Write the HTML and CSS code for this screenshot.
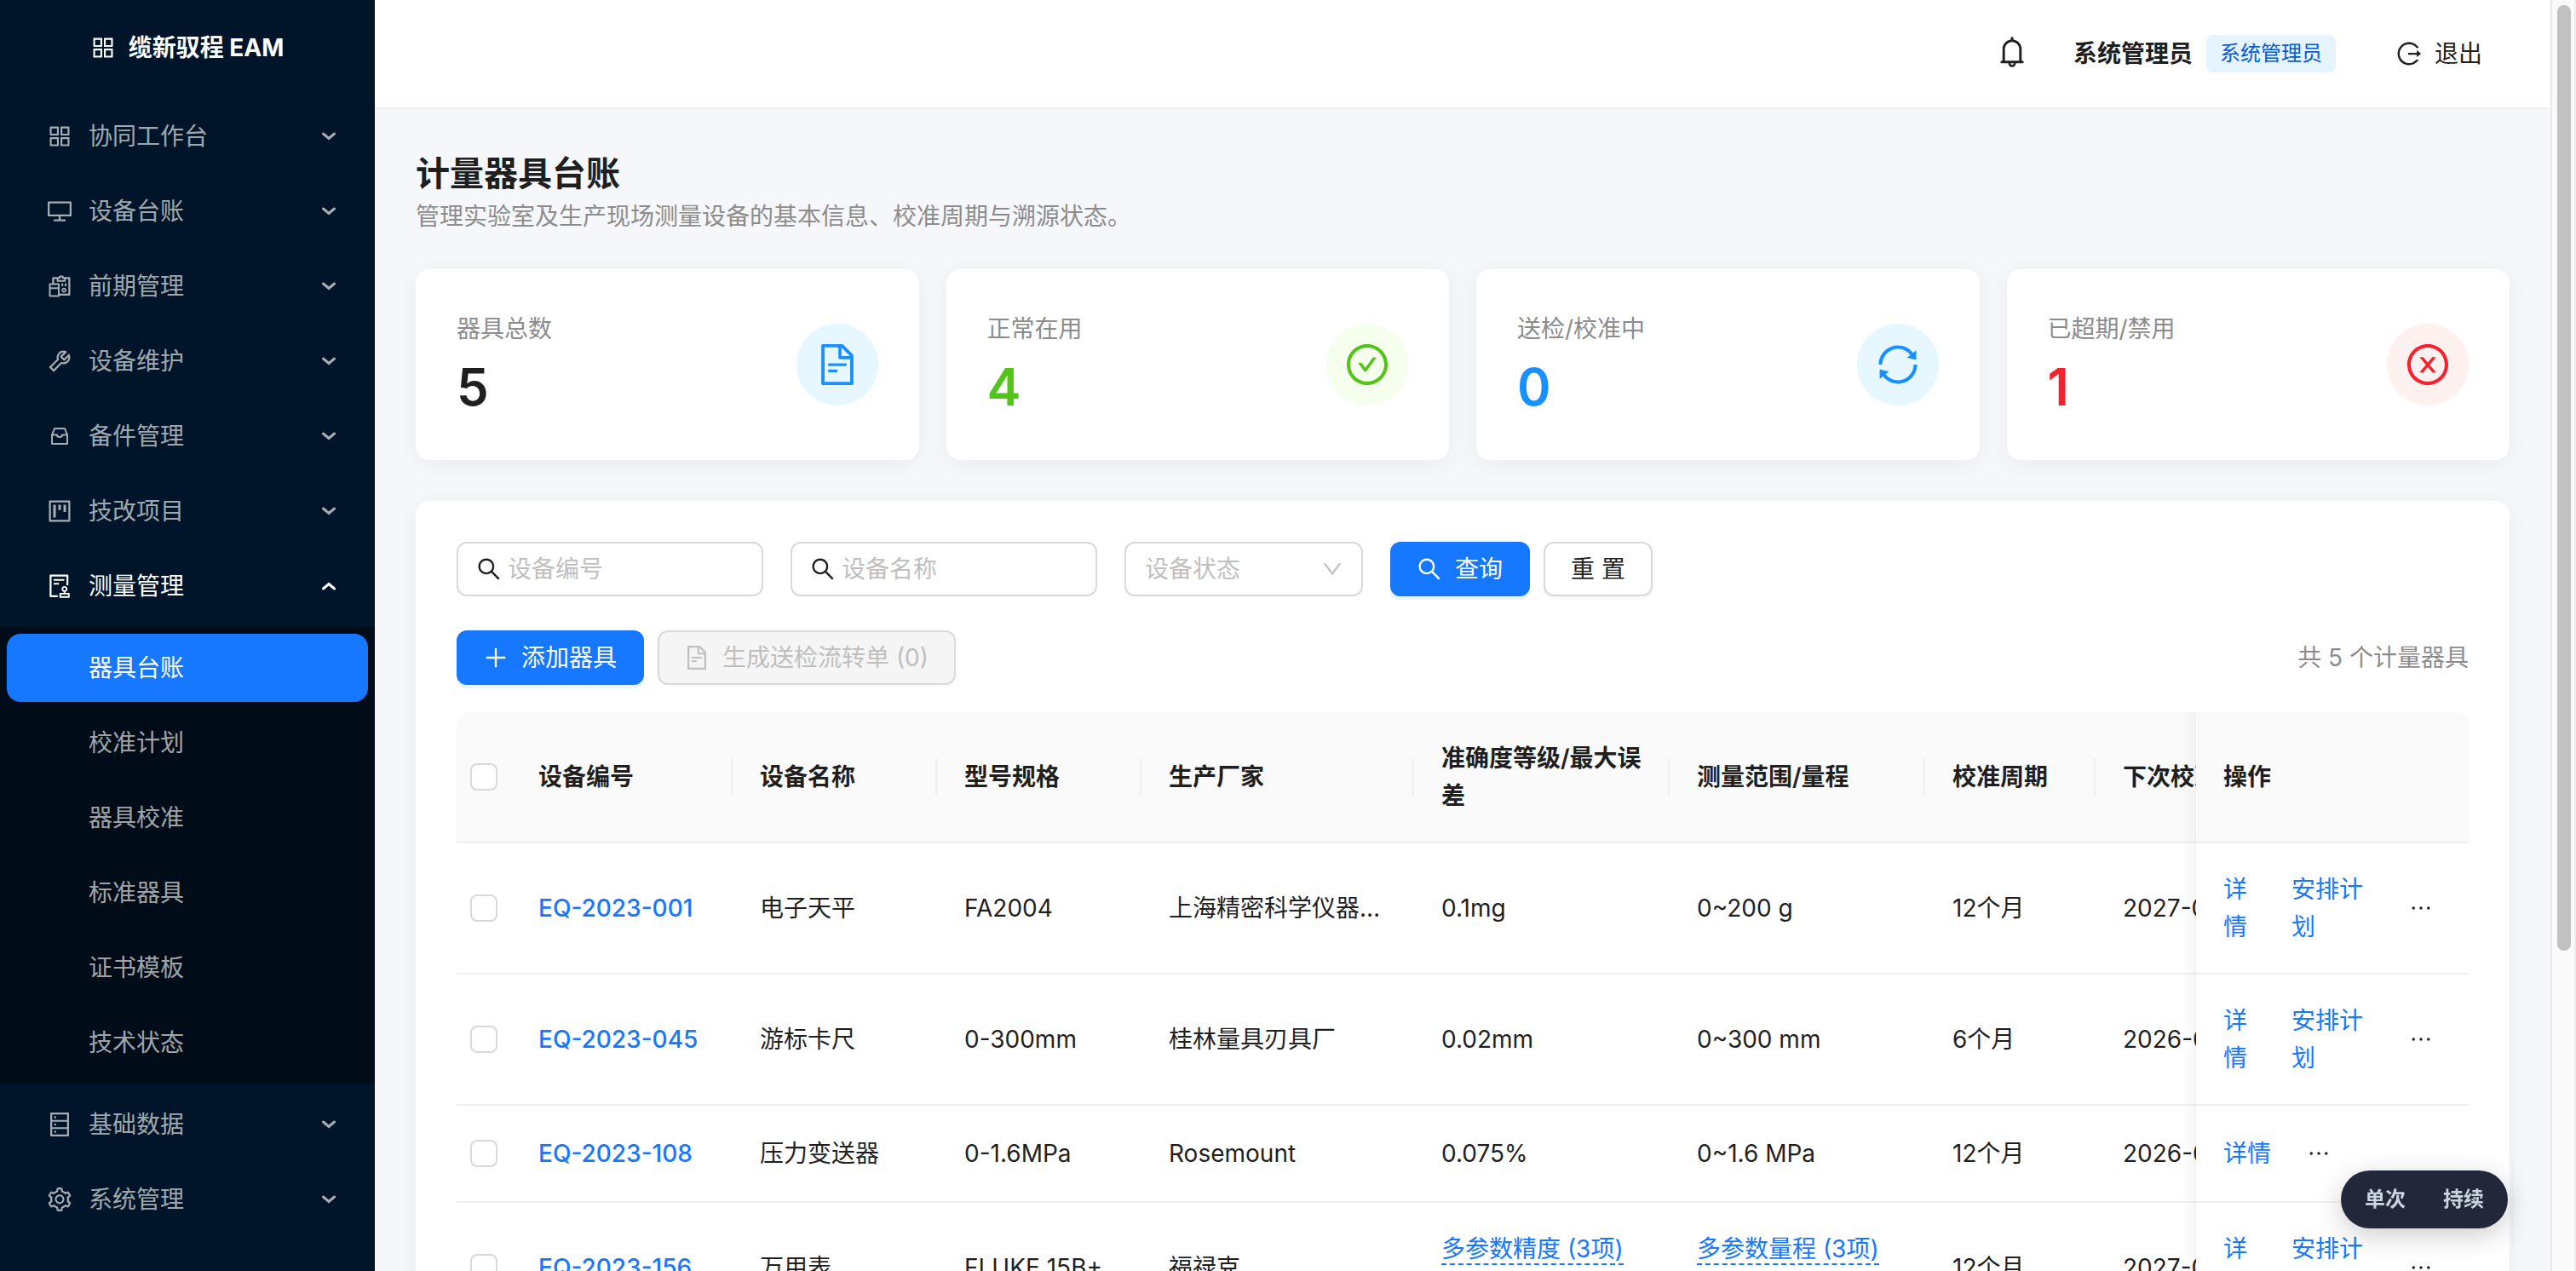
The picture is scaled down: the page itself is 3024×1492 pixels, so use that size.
FILE: index.html
```html
<!DOCTYPE html>
<html lang="zh-CN">
  <head>
    <meta charset="utf-8">
    <title>计量器具台账 - 缆新驭程 EAM</title>
    <link rel="stylesheet" href="styles.css">
  </head>
  <body>
    <svg class="sprite" aria-hidden="true">
      <symbol id="i-appstore" viewBox="64 64 896 896"><path d="M464 144H160c-8.800 0-16 7.200-16 16v304c0 8.800 7.200 16 16 16h304c8.800 0 16-7.200 16-16V160c0-8.800-7.200-16-16-16zm-52 268H212V212h200v200zm452-268H560c-8.800 0-16 7.200-16 16v304c0 8.800 7.200 16 16 16h304c8.800 0 16-7.200 16-16V160c0-8.800-7.200-16-16-16zm-52 268H612V212h200v200zM464 544H160c-8.800 0-16 7.200-16 16v304c0 8.800 7.200 16 16 16h304c8.800 0 16-7.200 16-16V560c0-8.800-7.200-16-16-16zm-52 268H212V612h200v200zm452-268H560c-8.800 0-16 7.200-16 16v304c0 8.800 7.200 16 16 16h304c8.800 0 16-7.200 16-16V560c0-8.800-7.200-16-16-16zm-52 268H612V612h200v200z"/></symbol>
      <symbol id="i-desktop" viewBox="64 64 896 896"><path d="M928 140H96c-17.700 0-32 14.300-32 32v496c0 17.700 14.300 32 32 32h380v112H304c-8.800 0-16 7.200-16 16v48c0 4.400 3.600 8 8 8h432c4.400 0 8-3.600 8-8v-48c0-8.800-7.200-16-16-16H548V700h380c17.700 0 32-14.300 32-32V172c0-17.700-14.300-32-32-32zm-40 488H136V212h752v416z"/></symbol>
      <symbol id="i-reconciliation" viewBox="64 64 896 896"><path d="M676 565c-50.800 0-92 41.200-92 92s41.200 92 92 92 92-41.200 92-92-41.200-92-92-92zm0 126c-18.800 0-34-15.200-34-34s15.200-34 34-34 34 15.200 34 34-15.200 34-34 34zm204-523H668c0-30.900-25.100-56-56-56h-80c-30.900 0-56 25.100-56 56H264c-17.700 0-32 14.300-32 32v200h-88c-17.700 0-32 14.300-32 32v448c0 17.700 14.300 32 32 32h336c17.700 0 32-14.300 32-32v-16h368c17.700 0 32-14.300 32-32V200c0-17.700-14.300-32-32-32zm-412 64h72v-56h64v56h72v48H468v-48zm-20 616H176V616h272v232zm0-296H176v-88h272v88zm392 240H512V432c0-17.700-14.300-32-32-32H304V240h100v104h336V240h100v552zM704 408v96c0 4.400 3.600 8 8 8h48c4.400 0 8-3.600 8-8v-96c0-4.400-3.600-8-8-8h-48c-4.400 0-8 3.600-8 8zM592 512h48c4.400 0 8-3.600 8-8v-96c0-4.400-3.600-8-8-8h-48c-4.400 0-8 3.600-8 8v96c0 4.400 3.600 8 8 8z"/></symbol>
      <symbol id="i-tool" viewBox="64 64 896 896"><path d="M876.600 239.500c-.5-.9-1.200-1.800-2-2.500-5-5-13.100-5-18.100 0L684.200 409.300l-67.900-67.900L788.700 169c.8-.8 1.400-1.600 2-2.500 3.600-6.100 1.600-13.900-4.500-17.500-98.200-58-226.800-44.700-311.300 39.700-67 67-89.200 162-66.500 247.400l-293 293c-3 3-2.800 7.900.3 11l169.700 169.700c3.100 3.100 8.100 3.300 11 .3l292.900-292.900c85.500 22.800 180.500.7 247.600-66.400 84.400-84.500 97.700-213.100 39.700-311.300zM786 499.800c-58.100 58.100-145.300 69.300-214.600 33.600l-8.800 8.800-.1-.1-274 274.100-79.200-79.200 230.100-230.100s0 .1.1.1l52.800-52.800c-35.700-69.300-24.500-156.500 33.600-214.600a184.200 184.200 0 01144-53.500L537 318.900a32.050 32.050 0 000 45.300l124.500 124.500a32.050 32.050 0 0045.300 0l132.800-132.800c3.700 51.800-14.400 104.800-53.600 143.900z"/></symbol>
      <symbol id="i-box" viewBox="0 0 28 28"><path d="M5 12.500v10.500h18V12.500L20 5H8zM5 12.500h6a3 2.500 0 0 0 6 0h6" fill="none" stroke="currentColor" stroke-width="2" stroke-linejoin="round"/></symbol>
      <symbol id="i-project" viewBox="64 64 896 896"><path d="M280 752h80c4.400 0 8-3.600 8-8V280c0-4.400-3.600-8-8-8h-80c-4.400 0-8 3.600-8 8v464c0 4.400 3.600 8 8 8zm192-280h80c4.400 0 8-3.600 8-8V280c0-4.400-3.600-8-8-8h-80c-4.400 0-8 3.600-8 8v184c0 4.400 3.600 8 8 8zm192 72h80c4.400 0 8-3.600 8-8V280c0-4.400-3.600-8-8-8h-80c-4.400 0-8 3.600-8 8v256c0 4.400 3.600 8 8 8zm216-432H144c-17.700 0-32 14.300-32 32v736c0 17.700 14.300 32 32 32h736c17.700 0 32-14.300 32-32V144c0-17.700-14.300-32-32-32zm-40 728H184V184h656v656z"/></symbol>
      <symbol id="i-audit" viewBox="64 64 896 896"><path d="M296 250c-4.400 0-8 3.600-8 8v48c0 4.400 3.600 8 8 8h384c4.400 0 8-3.600 8-8v-48c0-4.400-3.600-8-8-8H296zm184 144H296c-4.400 0-8 3.600-8 8v48c0 4.400 3.600 8 8 8h184c4.400 0 8-3.600 8-8v-48c0-4.400-3.600-8-8-8zm-48 458H208V148h560v320c0 4.400 3.600 8 8 8h56c4.400 0 8-3.600 8-8V108c0-17.700-14.300-32-32-32H168c-17.700 0-32 14.300-32 32v784c0 17.700 14.300 32 32 32h264c4.400 0 8-3.600 8-8v-56c0-4.400-3.600-8-8-8zm440-88H728v-36.600c46.300-13.800 80-56.600 80-107.400 0-61.900-50.100-112-112-112s-112 50.100-112 112c0 50.700 33.700 93.600 80 107.400V764H520c-8.800 0-16 7.200-16 16v152c0 8.800 7.200 16 16 16h352c8.800 0 16-7.200 16-16V780c0-8.800-7.200-16-16-16zM646 620c0-27.600 22.400-50 50-50s50 22.400 50 50-22.400 50-50 50-50-22.400-50-50zm180 266H566v-60h260v60z"/></symbol>
      <symbol id="i-database" viewBox="64 64 896 896"><path d="M832 64H192c-17.700 0-32 14.300-32 32v832c0 17.700 14.300 32 32 32h640c17.700 0 32-14.300 32-32V96c0-17.700-14.300-32-32-32zm-600 72h560v208H232V136zm560 480H232V408h560v208zm0 272H232V680h560v208zM304 240a40 40 0 1080 0 40 40 0 10-80 0zm0 272a40 40 0 1080 0 40 40 0 10-80 0zm0 272a40 40 0 1080 0 40 40 0 10-80 0z"/></symbol>
      <symbol id="i-setting" viewBox="64 64 896 896"><path d="M924.800 625.700l-65.500-56c3.100-19 4.700-38.400 4.700-57.800s-1.600-38.800-4.700-57.800l65.500-56a32.030 32.030 0 009.300-35.200l-.9-2.600a443.740 443.740 0 00-79.700-137.900l-1.800-2.100a32.120 32.120 0 00-35.100-9.500l-81.300 28.900c-30-24.600-63.500-44-99.700-57.600l-15.700-85a32.050 32.050 0 00-25.800-25.700l-2.700-.5c-52.100-9.400-106.900-9.400-159 0l-2.700.5a32.050 32.050 0 00-25.800 25.700l-15.800 85.400a351.860 351.860 0 00-99 57.400l-81.900-29.100a32 32 0 00-35.100 9.500l-1.800 2.100a446.020 446.020 0 00-79.700 137.900l-.9 2.600c-4.500 12.500-.8 26.500 9.300 35.200l66.300 56.600c-3.100 18.800-4.600 38-4.600 57.100 0 19.200 1.500 38.400 4.600 57.100L99 625.500a32.030 32.030 0 00-9.300 35.200l.9 2.600c18.100 50.400 44.900 96.900 79.700 137.900l1.800 2.100a32.120 32.120 0 0035.100 9.500l81.900-29.100c29.800 24.500 63.100 43.900 99 57.400l15.800 85.400a32.050 32.050 0 0025.800 25.700l2.700.5a449.400 449.400 0 00159 0l2.700-.5a32.050 32.050 0 0025.800-25.700l15.700-85a350 350 0 0099.700-57.600l81.300 28.900a32 32 0 0035.100-9.500l1.800-2.100c34.800-41.100 61.600-87.500 79.700-137.900l.9-2.600c4.500-12.300.8-26.300-9.300-35zM788.300 465.900c2.500 15.100 3.800 30.600 3.800 46.100s-1.300 31-3.800 46.100l-6.600 40.100 74.700 63.900a370.030 370.030 0 01-42.600 73.600L721 702.800l-31.400 25.800c-23.900 19.600-50.500 35-79.300 45.800l-38.100 14.300-17.900 97a377.500 377.500 0 01-85 0l-17.900-97.200-37.800-14.500c-28.500-10.800-55-26.200-78.700-45.700l-31.400-25.900-93.400 33.200c-17-22.900-31.200-47.600-42.600-73.600l75.500-64.500-6.500-40c-2.400-14.900-3.700-30.300-3.700-45.500 0-15.300 1.200-30.600 3.700-45.500l6.500-40-75.500-64.500c11.300-26.100 25.600-50.700 42.600-73.600l93.400 33.200 31.400-25.900c23.700-19.500 50.200-34.900 78.700-45.700l37.900-14.300 17.900-97.200c28.100-3.200 56.800-3.200 85 0l17.900 97 38.100 14.300c28.700 10.800 55.400 26.200 79.300 45.800l31.400 25.800 92.800-32.900c17 22.900 31.200 47.600 42.600 73.600L781.800 426l6.500 39.900zM512 326c-97.200 0-176 78.800-176 176s78.800 176 176 176 176-78.800 176-176-78.800-176-176-176zm79.200 255.200A111.600 111.600 0 01512 614c-29.900 0-58-11.700-79.200-32.800A111.600 111.600 0 01400 502c0-29.900 11.700-58 32.800-79.200C454 401.600 482.100 390 512 390c29.900 0 58 11.600 79.200 32.800A111.600 111.600 0 01624 502c0 29.900-11.700 58-32.800 79.200z"/></symbol>
      <symbol id="i-arrow" viewBox="0 0 16 16"><path d="M1.500 5L8 10.500 14.500 5" fill="none" stroke="currentColor" stroke-width="3" stroke-linecap="round"/></symbol>
      <symbol id="i-bell" viewBox="64 64 896 896"><path d="M816 768h-24V428c0-141.100-104.300-257.700-240-277.100V112c0-22.100-17.900-40-40-40s-40 17.900-40 40v38.900c-135.700 19.400-240 136-240 277.100v340h-24c-17.700 0-32 14.300-32 32v32c0 4.400 3.600 8 8 8h216c0 61.800 50.200 112 112 112s112-50.200 112-112h216c4.400 0 8-3.600 8-8v-32c0-17.700-14.300-32-32-32zM512 888c-26.500 0-48-21.500-48-48h96c0 26.500-21.500 48-48 48zM304 768V428c0-55.600 21.600-107.800 60.900-147.100S456.400 220 512 220c55.600 0 107.800 21.600 147.100 60.900S720 372.400 720 428v340H304z"/></symbol>
      <symbol id="i-logout" viewBox="64 64 896 896"><path d="M868 732h-70.300c-4.800 0-9.300 2.100-12.300 5.800-7 8.500-14.500 16.700-22.400 24.500a353.840 353.840 0 01-112.700 75.900A352.800 352.800 0 01512.400 866c-47.900 0-94.300-9.400-137.900-27.800a353.840 353.840 0 01-112.700-75.900 353.280 353.280 0 01-76-112.500C167.300 606.200 158 559.900 158 512s9.400-94.200 27.800-137.800c17.800-42.100 43.400-80 76-112.500s70.500-58.100 112.700-75.900c43.600-18.400 90-27.800 137.900-27.800 47.900 0 94.300 9.300 137.900 27.800 42.200 17.800 80.100 43.400 112.700 75.900 7.900 7.900 15.300 16.100 22.400 24.500 3 3.700 7.600 5.800 12.300 5.800H868c6.300 0 10.200-7 6.700-12.300C798 160.500 663.800 81.600 511.300 82 271.700 82.600 79.600 277.100 82 516.400 84.400 751.900 276.200 942 512.400 942c152.100 0 285.700-78.800 362.300-197.700 3.400-5.300-.4-12.300-6.700-12.300zm88.900-226.300L815 393.700c-5.300-4.200-13-.4-13 6.300v76H488c-4.400 0-8 3.600-8 8v56c0 4.400 3.600 8 8 8h314v76c0 6.700 7.800 10.500 13 6.300l141.900-112a8 8 0 000-12.600z"/></symbol>
      <symbol id="i-file" viewBox="64 64 896 896"><path d="M854.600 288.600L639.400 73.400c-6-6-14.100-9.400-22.600-9.400H192c-17.700 0-32 14.300-32 32v832c0 17.700 14.300 32 32 32h640c17.700 0 32-14.300 32-32V311.300c0-8.500-3.400-16.700-9.400-22.700zM790.200 326H602V137.800L790.200 326zm1.800 562H232V136h302v216a42 42 0 0042 42h216v494zM504 618H320c-4.400 0-8 3.600-8 8v48c0 4.400 3.600 8 8 8h184c4.400 0 8-3.600 8-8v-48c0-4.400-3.600-8-8-8zM312 490v48c0 4.400 3.600 8 8 8h384c4.400 0 8-3.600 8-8v-48c0-4.400-3.600-8-8-8H320c-4.400 0-8 3.600-8 8z"/></symbol>
      <symbol id="i-check" viewBox="64 64 896 896"><path d="M699 353h-46.900c-10.200 0-19.900 4.900-25.900 13.300L469 584.300l-71.200-98.800c-6-8.300-15.600-13.300-25.900-13.300H325c-6.500 0-10.300 7.400-6.500 12.700l124.600 172.800a31.800 31.800 0 0051.700 0l210.600-292c3.900-5.300.1-12.700-6.400-12.700z"/><path d="M512 64C264.600 64 64 264.600 64 512s200.600 448 448 448 448-200.600 448-448S759.400 64 512 64zm0 820c-205.400 0-372-166.600-372-372s166.600-372 372-372 372 166.600 372 372-166.600 372-372 372z"/></symbol>
      <symbol id="i-sync" viewBox="64 64 896 896"><path d="M168 504.200c1-43.700 10-86.100 26.900-126 17.300-41 42.100-77.700 73.700-109.400S337 212.300 378 195c42.400-17.900 87.400-27 133.900-27s91.500 9.100 133.800 27A341.500 341.500 0 01755 268.800c9.900 9.900 19.200 20.400 27.800 31.400l-60.200 47a8 8 0 003 14.100l175.700 43c5 1.200 9.900-2.600 9.900-7.700l.8-180.900c0-6.700-7.700-10.500-12.900-6.300l-56.400 44.100C765.800 155.100 646.200 92 511.800 92 282.700 92 96.300 275.600 92 503.800a8 8 0 008 8.200h60c4.400 0 7.900-3.500 8-7.800zm756 7.800h-60c-4.400 0-7.900 3.500-8 7.800-1 43.700-10 86.100-26.900 126-17.300 41-42.100 77.800-73.700 109.400A342.450 342.450 0 01512.100 856a342.240 342.240 0 01-243.200-100.800c-9.900-9.900-19.200-20.400-27.800-31.400l60.200-47a8 8 0 00-3-14.100l-175.700-43c-5-1.200-9.900 2.600-9.900 7.700l-.7 181c0 6.700 7.700 10.500 12.900 6.300l56.400-44.100C258.200 868.900 377.800 932 512.200 932c229.200 0 415.500-183.700 419.800-411.800a8 8 0 00-8-8.200z"/></symbol>
      <symbol id="i-close" viewBox="64 64 896 896"><path d="M685.400 354.800c0-4.400-3.600-8-8-8l-66 .3L512 465.600l-99.300-118.400-66.100-.3c-4.400 0-8 3.500-8 8 0 1.900.7 3.700 1.900 5.200l130.100 155L340.500 670a8.320 8.320 0 00-1.900 5.200c0 4.400 3.600 8 8 8l66.100-.3L512 564.400l99.300 118.400 66 .3c4.400 0 8-3.500 8-8 0-1.900-.7-3.700-1.900-5.200L553.500 515l130.100-155c1.200-1.400 1.800-3.300 1.800-5.200z"/><path d="M512 64C264.600 64 64 264.600 64 512s200.600 448 448 448 448-200.600 448-448S759.400 64 512 64zm0 820c-205.400 0-372-166.600-372-372s166.600-372 372-372 372 166.600 372 372-166.600 372-372 372z"/></symbol>
      <symbol id="i-search" viewBox="64 64 896 896"><path d="M909.600 854.500L649.900 594.800C690.200 542.700 712 479 712 412c0-80.200-31.300-155.400-87.900-212.100-56.600-56.700-132-87.900-212.100-87.900s-155.500 31.300-212.100 87.900C143.200 256.500 112 331.800 112 412c0 80.100 31.300 155.500 87.900 212.100C256.500 680.800 331.800 712 412 712c67 0 130.600-21.800 182.700-62l259.700 259.600a8.200 8.200 0 0011.600 0l43.600-43.500a8.200 8.200 0 000-11.600zM570.400 570.400C528 612.700 471.800 636 412 636s-116-23.300-158.400-65.600C211.300 528 188 471.800 188 412s23.300-116.100 65.600-158.400C296 211.300 352.200 188 412 188s116.100 23.200 158.400 65.600S636 352.200 636 412s-23.300 116.100-65.600 158.400z"/></symbol>
      <symbol id="i-down" viewBox="64 64 896 896"><path d="M884 256h-75c-5.100 0-9.900 2.500-12.900 6.600L512 654.200 227.900 262.600c-3-4.100-7.800-6.600-12.900-6.600h-75c-6.500 0-10.300 7.400-6.500 12.700l352.600 486.100c12.800 17.600 39 17.600 51.700 0l352.600-486.100c3.900-5.300.1-12.700-6.400-12.700z"/></symbol>
      <symbol id="i-plus" viewBox="64 64 896 896"><path d="M482 152h60q8 0 8 8v704q0 8-8 8h-60q-8 0-8-8V160q0-8 8-8z"/><path d="M160 474h704q8 0 8 8v60q0 8-8 8H160q-8 0-8-8v-60q0-8 8-8z"/></symbol>
      <symbol id="i-more" viewBox="64 64 896 896"><path d="M176 511a56 56 0 10112 0 56 56 0 10-112 0zm280 0a56 56 0 10112 0 56 56 0 10-112 0zm280 0a56 56 0 10112 0 56 56 0 10-112 0z"/></symbol>
    </svg>

    <div class="layout">
      <aside class="sider">
        <div class="logo"><svg class="icon"><use href="#i-appstore"/></svg>缆新驭程 EAM</div>
        <nav>
          <ul class="menu">
            <li><button class="menu-item"><svg class="icon"><use href="#i-appstore"/></svg>协同工作台<svg class="arrow"><use href="#i-arrow"/></svg></button></li>
            <li><button class="menu-item"><svg class="icon"><use href="#i-desktop"/></svg>设备台账<svg class="arrow"><use href="#i-arrow"/></svg></button></li>
            <li><button class="menu-item"><svg class="icon"><use href="#i-reconciliation"/></svg>前期管理<svg class="arrow"><use href="#i-arrow"/></svg></button></li>
            <li><button class="menu-item"><svg class="icon"><use href="#i-tool"/></svg>设备维护<svg class="arrow"><use href="#i-arrow"/></svg></button></li>
            <li><button class="menu-item"><svg class="icon"><use href="#i-box"/></svg>备件管理<svg class="arrow"><use href="#i-arrow"/></svg></button></li>
            <li><button class="menu-item"><svg class="icon"><use href="#i-project"/></svg>技改项目<svg class="arrow"><use href="#i-arrow"/></svg></button></li>
            <li>
              <button class="menu-item open" aria-expanded="true"><svg class="icon"><use href="#i-audit"/></svg>测量管理<svg class="arrow"><use href="#i-arrow"/></svg></button>
              <ul class="submenu">
                <li><a class="active" href="#">器具台账</a></li>
                <li><a href="#">校准计划</a></li>
                <li><a href="#">器具校准</a></li>
                <li><a href="#">标准器具</a></li>
                <li><a href="#">证书模板</a></li>
                <li><a href="#">技术状态</a></li>
              </ul>
            </li>
            <li><button class="menu-item"><svg class="icon"><use href="#i-database"/></svg>基础数据<svg class="arrow"><use href="#i-arrow"/></svg></button></li>
            <li><button class="menu-item"><svg class="icon"><use href="#i-setting"/></svg>系统管理<svg class="arrow"><use href="#i-arrow"/></svg></button></li>
          </ul>
        </nav>
      </aside>

      <div class="main">
        <header class="header">
          <button class="bell" aria-label="通知"><svg><use href="#i-bell"/></svg></button>
          <div class="user"><strong>系统管理员</strong><span class="tag">系统管理员</span></div>
          <button class="logout"><svg class="icon"><use href="#i-logout"/></svg>退出</button>
        </header>

        <main class="content">
          <h1>计量器具台账</h1>
          <p class="desc">管理实验室及生产现场测量设备的基本信息、校准周期与溯源状态。</p>

          <section class="stats">
            <div class="card stat">
              <div><div class="stat-title">器具总数</div><div class="stat-value">5</div></div>
              <span class="stat-icon blue"><svg><use href="#i-file"/></svg></span>
            </div>
            <div class="card stat">
              <div><div class="stat-title">正常在用</div><div class="stat-value text-green">4</div></div>
              <span class="stat-icon green"><svg><use href="#i-check"/></svg></span>
            </div>
            <div class="card stat">
              <div><div class="stat-title">送检/校准中</div><div class="stat-value text-blue">0</div></div>
              <span class="stat-icon blue"><svg><use href="#i-sync"/></svg></span>
            </div>
            <div class="card stat">
              <div><div class="stat-title">已超期/禁用</div><div class="stat-value text-red">1</div></div>
              <span class="stat-icon red"><svg><use href="#i-close"/></svg></span>
            </div>
          </section>

          <section class="card panel">
            <form class="filters">
              <label class="field"><svg class="icon"><use href="#i-search"/></svg><input type="text" placeholder="设备编号" aria-label="设备编号"></label>
              <label class="field"><svg class="icon"><use href="#i-search"/></svg><input type="text" placeholder="设备名称" aria-label="设备名称"></label>
              <div class="select">
                <select aria-label="设备状态">
                  <option value="">设备状态</option>
                </select>
                <svg><use href="#i-down"/></svg>
              </div>
              <div class="buttons">
                <button type="button" class="btn primary"><svg class="icon"><use href="#i-search"/></svg>查询</button>
                <button type="button" class="btn">重 置</button>
              </div>
            </form>

            <div class="toolbar">
              <div class="buttons">
                <button class="btn primary"><svg class="icon"><use href="#i-plus"/></svg>添加器具</button>
                <button class="btn" disabled><svg class="icon"><use href="#i-file"/></svg>生成送检流转单 (0)</button>
              </div>
              <span class="total">共 5 个计量器具</span>
            </div>

            <div class="table-wrap">
              <table>
                <colgroup>
                  <col class="w-check"><col class="w-code"><col class="w-name"><col class="w-name"><col class="w-maker">
                  <col class="w-range"><col class="w-range"><col class="w-cycle"><col class="w-date"><col class="w-cycle"><col class="w-maker">
                </colgroup>
                <thead>
                  <tr>
                    <th class="check"><input type="checkbox" aria-label="全选"></th>
                    <th>设备编号</th>
                    <th>设备名称</th>
                    <th>型号规格</th>
                    <th>生产厂家</th>
                    <th>准确度等级/最大误差</th>
                    <th>测量范围/量程</th>
                    <th>校准周期</th>
                    <th>下次校准日期</th>
                    <th>状态</th>
                    <th class="fixed">操作</th>
                  </tr>
                </thead>
                <tbody>
                  <tr>
                    <td class="check"><input type="checkbox" aria-label="EQ-2023-001"></td>
                    <td><a class="code" href="#">EQ-2023-001</a></td>
                    <td>电子天平</td>
                    <td>FA2004</td>
                    <td class="ellipsis">上海精密科学仪器有限公司</td>
                    <td>0.1mg</td>
                    <td>0~200 g</td>
                    <td>12个月</td>
                    <td>2027-01-15</td>
                    <td>正常</td>
                    <td class="fixed"><div class="actions"><a href="#">详情</a><a href="#">安排计划</a><button aria-label="更多"><svg><use href="#i-more"/></svg></button></div></td>
                  </tr>
                  <tr>
                    <td class="check"><input type="checkbox" aria-label="EQ-2023-045"></td>
                    <td><a class="code" href="#">EQ-2023-045</a></td>
                    <td>游标卡尺</td>
                    <td>0-300mm</td>
                    <td class="ellipsis">桂林量具刃具厂</td>
                    <td>0.02mm</td>
                    <td>0~300 mm</td>
                    <td>6个月</td>
                    <td>2026-09-20</td>
                    <td>正常</td>
                    <td class="fixed"><div class="actions"><a href="#">详情</a><a href="#">安排计划</a><button aria-label="更多"><svg><use href="#i-more"/></svg></button></div></td>
                  </tr>
                  <tr>
                    <td class="check"><input type="checkbox" aria-label="EQ-2023-108"></td>
                    <td><a class="code" href="#">EQ-2023-108</a></td>
                    <td>压力变送器</td>
                    <td>0-1.6MPa</td>
                    <td class="ellipsis">Rosemount</td>
                    <td>0.075%</td>
                    <td>0~1.6 MPa</td>
                    <td>12个月</td>
                    <td>2026-01-10</td>
                    <td>超期</td>
                    <td class="fixed"><div class="actions"><a href="#">详情</a><button aria-label="更多"><svg><use href="#i-more"/></svg></button></div></td>
                  </tr>
                  <tr>
                    <td class="check"><input type="checkbox" aria-label="EQ-2023-156"></td>
                    <td><a class="code" href="#">EQ-2023-156</a></td>
                    <td>万用表</td>
                    <td>FLUKE 15B+</td>
                    <td class="ellipsis">福禄克</td>
                    <td class="top"><a class="multi" href="#">多参数精度 (3项)</a></td>
                    <td class="top"><a class="multi" href="#">多参数量程 (3项)</a></td>
                    <td>12个月</td>
                    <td>2027-02-01</td>
                    <td>正常</td>
                    <td class="fixed"><div class="actions"><a href="#">详情</a><a href="#">安排计划</a><button aria-label="更多"><svg><use href="#i-more"/></svg></button></div></td>
                  </tr>
                </tbody>
              </table>
            </div>
          </section>
        </main>
      </div>

      <div class="scrollbar"><div class="thumb"></div></div>
    </div>

    <div class="float-bar">
      <button>单次</button>
      <button>持续</button>
    </div>
  </body>
</html>
```
FILE: styles.css
```css
* {
  box-sizing: border-box;
}
body {
  margin: 0;
  font-family: Inter, "Noto Sans CJK SC", sans-serif;
  font-size: 28px;
  line-height: 44px;
  color: #1f1f1f;
  background-color: #f5f7fb;
  overflow: hidden;
}
button, input, select {
  font: inherit;
  color: inherit;
}
button {
  border: 0;
  background: none;
  padding: 0;
  cursor: pointer;
}
a {
  color: #1677ff;
  text-decoration: none;
}
ul {
  list-style: none;
  margin: 0;
  padding: 0;
}
svg {
  fill: currentColor;
  flex: none;
}
.sprite {
  display: none;
}
.icon {
  width: 28px;
  height: 28px;
}
.layout {
  display: flex;
  height: 100vh;
}

/* sider */
.sider {
  width: 440px;
  flex: none;
  background-color: #001529;
  color: rgba(255, 255, 255, 0.65);
  overflow: hidden;
}
.logo {
  display: flex;
  align-items: center;
  justify-content: center;
  gap: 16px;
  height: 112px;
  color: #fff;
  font-weight: 700;
}
.menu {
  display: flex;
  flex-direction: column;
  gap: 8px;
  padding-top: 8px;
}
.menu-item {
  display: flex;
  align-items: center;
  gap: 20px;
  width: 100%;
  height: 80px;
  padding: 0 46px 0 56px;
}
.menu-item.open {
  color: #fff;
}
.arrow {
  width: 16px;
  height: 16px;
  margin-left: auto;
}
.open .arrow {
  transform: rotate(180deg);
}
.submenu {
  display: flex;
  flex-direction: column;
  gap: 8px;
  margin-top: 8px;
  padding: 8px;
  background-color: #000c17;
}
.menu > li:nth-child(7) {
  margin-bottom: 0;
}
.submenu a {
  display: block;
  padding: 18px 96px;
  border-radius: 16px;
  color: rgba(255, 255, 255, 0.65);
}
.submenu a.active {
  background-color: #1677ff;
  color: #fff;
}

/* header */
.main {
  flex: 1;
  min-width: 0;
  overflow: hidden;
}
.header {
  display: flex;
  align-items: center;
  justify-content: flex-end;
  gap: 40px;
  height: 128px;
  padding: 0 48px;
  background-color: #fff;
  border-bottom: 2px solid #f0f0f0;
}
.bell {
  width: 64px;
  height: 64px;
}
.bell svg {
  display: block;
  width: 36px;
  height: 36px;
  margin: 0 auto 4px;
}
.user {
  display: flex;
  align-items: center;
  gap: 16px;
}
.user strong {
  font-weight: 700;
}
.tag {
  padding: 0 16px;
  border-radius: 8px;
  background-color: #e6f4ff;
  color: #0958d9;
  font-size: 24px;
}
.logout {
  display: flex;
  align-items: center;
  gap: 16px;
  padding: 0 32px;
}

/* content */
.content {
  padding: 48px;
}
h1 {
  margin: 0;
  font-size: 40px;
  line-height: 56px;
  font-weight: 700;
}
.desc {
  margin: 0 0 40px;
  color: #8c8c8c;
}
.card {
  background-color: #fff;
  border-radius: 16px;
  box-shadow: 0 4px 24px rgba(0, 0, 0, 0.05);
  padding: 48px;
}
.stats {
  display: grid;
  grid-template-columns: repeat(4, 1fr);
  gap: 32px;
  margin-bottom: 48px;
}
.stat {
  display: flex;
  align-items: center;
  justify-content: space-between;
}
.stat-title {
  margin-bottom: 8px;
  color: #8c8c8c;
}
.stat-value {
  font-size: 60px;
  line-height: 76px;
  font-weight: 600;
}
.stat-icon {
  display: flex;
  align-items: center;
  justify-content: center;
  width: 96px;
  height: 96px;
  border-radius: 50%;
}
.stat-icon svg {
  width: 48px;
  height: 48px;
}
.blue {
  background-color: #e6f7ff;
  color: #1890ff;
}
.green {
  background-color: #f6ffed;
  color: #52c41a;
}
.red {
  background-color: #fff1f0;
  color: #f5222d;
}
.text-green {
  color: #52c41a;
}
.text-blue {
  color: #1890ff;
}
.text-red {
  color: #f5222d;
}

/* filters */
.filters {
  display: flex;
  gap: 32px;
  margin-bottom: 40px;
}
.field {
  display: flex;
  align-items: center;
  gap: 8px;
  width: 360px;
  height: 64px;
  padding: 0 22px;
  border: 2px solid #d9d9d9;
  border-radius: 12px;
}
.field input {
  flex: 1;
  min-width: 0;
  padding: 0;
  border: 0;
  outline: 0;
  background: none;
}
.field input::placeholder {
  color: #bfbfbf;
}
.select {
  position: relative;
  width: 280px;
}
.select select {
  width: 100%;
  height: 64px;
  padding: 0 22px;
  border: 2px solid #d9d9d9;
  border-radius: 12px;
  background-color: #fff;
  color: #bfbfbf;
  appearance: none;
}
.select svg {
  position: absolute;
  top: 20px;
  right: 24px;
  width: 24px;
  height: 24px;
  color: #bfbfbf;
  pointer-events: none;
}
.buttons {
  display: flex;
  gap: 16px;
}
.btn {
  display: flex;
  align-items: center;
  gap: 16px;
  height: 64px;
  padding: 0 30px;
  border: 2px solid #d9d9d9;
  border-radius: 12px;
  background-color: #fff;
  box-shadow: 0 4px 0 rgba(0, 0, 0, 0.02);
}
.btn.primary {
  border-color: #1677ff;
  background-color: #1677ff;
  box-shadow: 0 4px 0 rgba(5, 145, 255, 0.1);
  color: #fff;
}
.btn:disabled {
  background-color: #f5f5f5;
  box-shadow: none;
  color: #bfbfbf;
}
.toolbar {
  display: flex;
  align-items: center;
  justify-content: space-between;
  margin-bottom: 32px;
}
.total {
  color: #8c8c8c;
}

/* table */
.table-wrap {
  overflow-x: auto;
  border-radius: 16px 16px 0 0;
}
table {
  width: 2704px;
  table-layout: fixed;
  border-collapse: separate;
  border-spacing: 0;
}
.w-check {
  width: 64px;
}
.w-code, .w-date {
  width: 260px;
}
.w-name {
  width: 240px;
}
.w-maker {
  width: 320px;
}
.w-range {
  width: 300px;
}
.w-cycle {
  width: 200px;
}
th, td {
  position: relative;
  padding: 32px;
  border-bottom: 2px solid #f0f0f0;
  text-align: left;
}
th {
  background-color: #fafafa;
  font-weight: 600;
}
th:not(.check):not(.fixed)::after {
  content: "";
  position: absolute;
  top: 54px;
  right: 0;
  width: 2px;
  height: 44px;
  background-color: #f0f0f0;
}
td {
  background-color: #fff;
}
.check {
  padding: 0 16px;
}
.check input {
  display: block;
  appearance: none;
  width: 32px;
  height: 32px;
  margin: 0;
  border: 2px solid #d9d9d9;
  border-radius: 8px;
  background-color: #fff;
}
.code {
  font-weight: 500;
}
.ellipsis {
  overflow: hidden;
  text-overflow: ellipsis;
  white-space: nowrap;
}
.top {
  vertical-align: top;
}
.multi {
  border-bottom: 2px dashed #1677ff;
}
.fixed {
  position: sticky;
  right: 0;
  z-index: 1;
}
.fixed::before {
  content: "";
  position: absolute;
  top: 0;
  bottom: -2px;
  left: -60px;
  width: 60px;
  box-shadow: inset -20px 0 16px -16px rgba(5, 5, 5, 0.06);
  pointer-events: none;
}
.actions {
  display: flex;
  align-items: center;
  gap: 32px;
}
.actions button {
  flex: none;
  width: 48px;
  height: 48px;
}
.actions svg {
  display: block;
  width: 28px;
  height: 28px;
  margin: 0 auto;
}

/* page scroll track */
.scrollbar {
  flex: none;
  width: 30px;
  padding: 6px;
  background-color: #fafafa;
  border-left: 2px solid #e8e8e8;
  border-right: 2px solid #ededed;
}
.thumb {
  width: 16px;
  height: 75%;
  border-radius: 8px;
  background-color: #c1c1c1;
}

.float-bar {
  position: fixed;
  right: 80px;
  bottom: 50px;
  z-index: 10;
  display: flex;
  gap: 4px;
  padding: 8px;
  border-radius: 34px;
  background-color: #22273a;
  box-shadow: 0 8px 32px rgba(0, 0, 0, 0.2);
}
.float-bar button {
  height: 52px;
  padding: 0 20px;
  color: #cbd5e1;
  font-size: 24px;
  font-weight: 600;
}
```
